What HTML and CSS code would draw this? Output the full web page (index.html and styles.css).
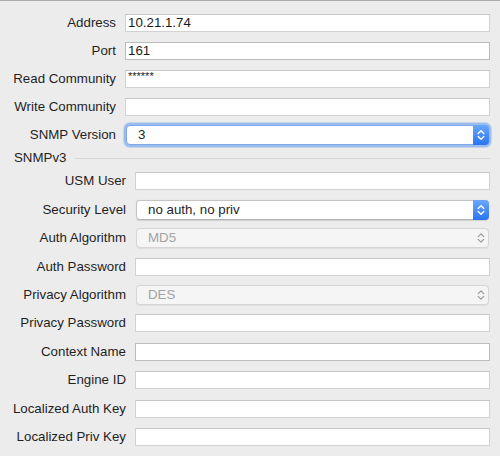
FILE: index.html
```html
<!DOCTYPE html>
<html>
<head>
<meta charset="utf-8">
<link rel="stylesheet" href="styles.css">
</head>
<body>
<div class="form">
  <div class="grid top">
    <div class="lbl">Address</div><div class="field">10.21.1.74</div>
    <div class="lbl">Port</div><div class="field dark">161</div>
    <div class="lbl">Read Community</div><div class="field pw">******</div>
    <div class="lbl">Write Community</div><div class="field"></div>
    <div class="lbl">SNMP Version</div>
    <div class="popup focus"><span class="ptext">3</span>
      <span class="stepper blue"><svg width="8" height="12" viewBox="0 0 8 12"><path d="M1.2 4.6 L4 1.8 L6.8 4.6 M1.2 7.4 L4 10.2 L6.8 7.4" fill="none" stroke="#fff" stroke-width="1.4" stroke-linecap="round" stroke-linejoin="round"/></svg></span>
    </div>
  </div>
  <div class="group"><span class="gtitle">SNMPv3</span><span class="rule"></span></div>
  <div class="grid bottom">
    <div class="lbl">USM User</div><div class="field"></div>
    <div class="lbl">Security Level</div>
    <div class="popup"><span class="ptext">no auth, no priv</span>
      <span class="stepper blue"><svg width="8" height="12" viewBox="0 0 8 12"><path d="M1.2 4.6 L4 1.8 L6.8 4.6 M1.2 7.4 L4 10.2 L6.8 7.4" fill="none" stroke="#fff" stroke-width="1.4" stroke-linecap="round" stroke-linejoin="round"/></svg></span>
    </div>
    <div class="lbl">Auth Algorithm</div>
    <div class="popup disabled"><span class="ptext">MD5</span>
      <span class="stepper"><svg width="8" height="12" viewBox="0 0 8 12"><path d="M1.2 4.6 L4 1.8 L6.8 4.6 M1.2 7.4 L4 10.2 L6.8 7.4" fill="none" stroke="#9a9a9a" stroke-width="1.2" stroke-linecap="round" stroke-linejoin="round"/></svg></span>
    </div>
    <div class="lbl">Auth Password</div><div class="field"></div>
    <div class="lbl">Privacy Algorithm</div>
    <div class="popup disabled"><span class="ptext">DES</span>
      <span class="stepper"><svg width="8" height="12" viewBox="0 0 8 12"><path d="M1.2 4.6 L4 1.8 L6.8 4.6 M1.2 7.4 L4 10.2 L6.8 7.4" fill="none" stroke="#9a9a9a" stroke-width="1.2" stroke-linecap="round" stroke-linejoin="round"/></svg></span>
    </div>
    <div class="lbl">Privacy Password</div><div class="field"></div>
    <div class="lbl">Context Name</div><div class="field dark"></div>
    <div class="lbl">Engine ID</div><div class="field"></div>
    <div class="lbl">Localized Auth Key</div><div class="field"></div>
    <div class="lbl">Localized Priv Key</div><div class="field"></div>
  </div>
</div>
</body>
</html>
```
FILE: styles.css
```css
html, body {
  margin: 0;
  padding: 0;
}
body {
  width: 500px;
  height: 456px;
  background: #ececec;
  border-top: 1px solid #ababab;
  box-sizing: border-box;
  font-family: "Liberation Sans", Arial, sans-serif;
  font-size: 13.3px;
  color: #1f1f1f;
  overflow: hidden;
}
.form {
  display: flex;
  flex-direction: column;
}
.grid {
  display: grid;
  column-gap: 9px;
  align-items: center;
  padding-right: 10px;
}
.top {
  padding-top: 8px;
  grid-template-columns: 116px 1fr;
  grid-auto-rows: 28px;
}
.bottom {
  grid-template-columns: 126px 1fr;
  grid-auto-rows: 28.4px;
}
.lbl {
  text-align: right;
  white-space: nowrap;
  line-height: 16px;
}
.field {
  height: 18px;
  box-sizing: border-box;
  background: #fff;
  border: 1px solid #d2d2d2;
  border-top-color: #c6c6c6;
  padding: 0 2px;
  line-height: 16px;
  color: #1a1a1a;
}
.field.dark {
  border-color: #bcbcbc;
}
.field.pw {
  font-size: 11px;
  line-height: 11px;
}
.group {
  height: 18.3px;
  display: flex;
  align-items: center;
  gap: 9px;
  padding: 0 10px 0 14px;
}
.gtitle {
  line-height: 14px;
}
.rule {
  flex: 1;
  height: 1px;
  background: #d6d6d6;
}
.popup {
  height: 20px;
  box-sizing: border-box;
  margin-left: 1px;
  margin-right: 1px;
  display: flex;
  align-items: center;
  background: #fff;
  border: 1px solid #c4c4c4;
  border-bottom-color: #b2b2b2;
  border-radius: 4px;
  box-shadow: 0 0.5px 1px rgba(0,0,0,0.12);
  position: relative;
}
.popup.focus {
  border-color: #7da8e6;
  box-shadow: 0 0 0 2px #9bbcef, 0 0 0 3px rgba(130,170,235,0.35);
}
.ptext {
  flex: 1;
  padding-left: 11px;
  line-height: 16px;
}
.stepper {
  width: 16px;
  align-self: stretch;
  margin: -1px -1px -1px 0;
  display: flex;
  align-items: center;
  justify-content: center;
  border-radius: 0 4px 4px 0;
}
.stepper.blue {
  background: linear-gradient(#69a8fb, #2a74f3);
}
.popup.disabled {
  background: #f5f5f5;
  border-color: #d6d6d6;
  box-shadow: 0 0.5px 1px rgba(0,0,0,0.06);
}
.popup.disabled .ptext {
  color: #a3a3a3;
}
```
